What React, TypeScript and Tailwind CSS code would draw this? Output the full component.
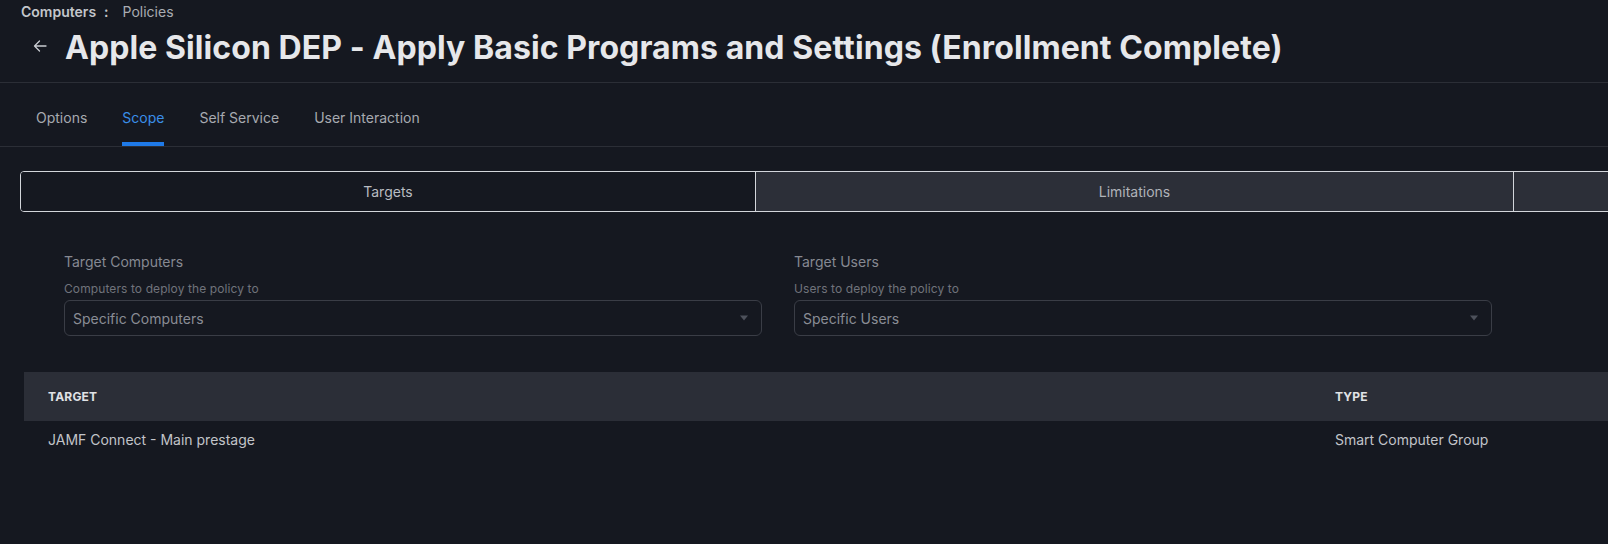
import React from "react";

function Caret() {
  return (
    <svg width="10" height="6" viewBox="0 0 10 6" className="shrink-0">
      <path d="M1 0.5 L9 0.5 L5 5.5 Z" fill="#4d515b" />
    </svg>
  );
}

function ArrowLeft() {
  return (
    <svg width="14" height="14" viewBox="0 0 14 14" fill="none">
      <path d="M13 7H1.5M6.5 2L1.5 7l5 5" stroke="#c9ccd1" strokeWidth="1.3" strokeLinecap="round" strokeLinejoin="round" />
    </svg>
  );
}

function Field({ label, help, value }: { label: string; help: string; value: string }) {
  return (
    <div className="flex flex-col w-[698px]">
      <div className="text-[14px] leading-[20px] text-[#868992]">{label}</div>
      <div className="mt-[9px] text-[12px] leading-[16px] text-[#70737b] tracking-[0.1px]">{help}</div>
      <div className="mt-[3px] h-[36px] rounded-[6px] border border-[#3a3d46] flex items-center justify-between pl-[8px] pr-[12px]">
        <span className="text-[14px] text-[#8a8d95]">{value}</span>
        <Caret />
      </div>
    </div>
  );
}

function Tab({ label, active }: { label: string; active?: boolean }) {
  return (
    <div className="h-[63px] flex flex-col items-center">
      <div className={"flex-1 flex items-center pt-[10px] text-[14px] " + (active ? "text-[#3a8ee8]" : "text-[#a7aab0]")}>
        {label}
      </div>
      <div className={"h-[4px] w-full " + (active ? "bg-[#1f7ae8]" : "bg-transparent")} />
    </div>
  );
}

export default function App() {
  return (
    <div
      className="w-full h-[544px] overflow-hidden bg-[#151820]"
      style={{ fontFamily: "Inter, 'Noto Sans', sans-serif" }}
    >
      <div className="h-[83px] border-b border-[#2b2e36] px-[21px]">
        <div className="pt-[3px] flex items-center text-[14px] leading-[18px]">
          <span className="font-semibold text-[#c3c6cb]">Computers</span>
          <span className="font-semibold text-[#c3c6cb] ml-[8px]">:</span>
          <span className="ml-[14px] text-[#a9acb2]">Policies</span>
        </div>
        <div className="flex items-center mt-[7px]">
          <div className="ml-[12px] w-[16px] flex items-center pb-[4px]"><ArrowLeft /></div>
          <h1 className="ml-[16px] text-[32px] leading-[40px] font-bold text-[#e6e7ea] whitespace-nowrap tracking-[0.08px]">
            Apple Silicon DEP - Apply Basic Programs and Settings (Enrollment Complete)
          </h1>
        </div>
      </div>

      <div className="h-[64px] border-b border-[#2b2e36] flex items-end pl-[36px] gap-[35px]">
        <Tab label="Options" />
        <Tab label="Scope" active />
        <Tab label="Self Service" />
        <Tab label="User Interaction" />
      </div>

      <div className="pl-[20px] pt-[24px]">
        <div className="flex w-[1700px] h-[41px] border border-[#d3d6db] rounded-l-[4px] overflow-hidden">
          <div className="w-[734px] flex items-center justify-center text-[14px] text-[#b9bcc2] bg-[#151820]">Targets</div>
          <div className="w-[758px] border-l border-[#d3d6db] flex items-center justify-center text-[14px] text-[#b0b3b9] bg-[#2c2f38]">Limitations</div>
          <div className="flex-1 border-l border-[#d3d6db] bg-[#2c2f38]" />
        </div>
      </div>

      <div className="pl-[64px] pt-[40px] flex gap-[32px]">
        <Field label="Target Computers" help="Computers to deploy the policy to" value="Specific Computers" />
        <Field label="Target Users" help="Users to deploy the policy to" value="Specific Users" />
      </div>

      <div className="pl-[24px] pt-[36px]">
        <div className="h-[49px] bg-[#2b2e37] flex items-center text-[12px] font-bold text-[#e0e2e6] tracking-[0.2px]">
          <div className="w-[1311px] pl-[24px]">TARGET</div>
          <div>TYPE</div>
        </div>
        <div className="h-[36px] flex items-center text-[14px] text-[#c2c4c9]">
          <div className="w-[1311px] pl-[24px]">JAMF Connect - Main prestage</div>
          <div>Smart Computer Group</div>
        </div>
      </div>
    </div>
  );
}
